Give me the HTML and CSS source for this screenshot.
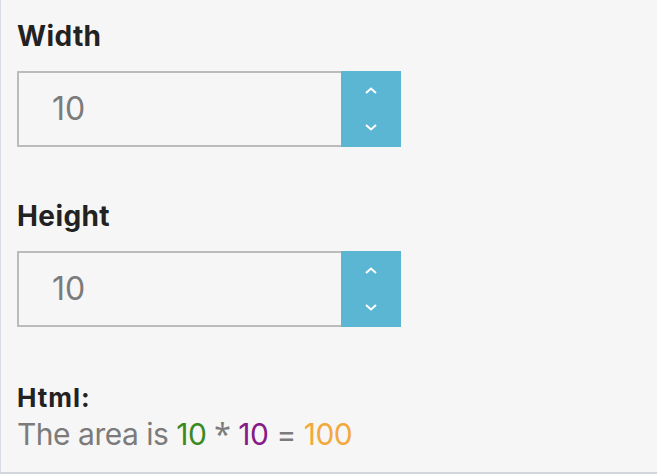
FILE: index.html
```html
<!DOCTYPE html>
<html>
<head>
<meta charset="utf-8">
<link rel="stylesheet" href="styles.css">
</head>
<body>
<div class="panel">
  <div class="field">
    <div class="label">Width</div>
    <div class="num">
      <div class="value">10</div>
      <div class="spin">
        <svg class="chev" width="12" height="7" viewBox="0 0 12 7"><path d="M1 6 L6 1.5 L11 6" fill="none" stroke="#fff" stroke-width="2"/></svg>
        <svg class="chev" width="12" height="7" viewBox="0 0 12 7"><path d="M1 1 L6 5.5 L11 1" fill="none" stroke="#fff" stroke-width="2"/></svg>
      </div>
    </div>
  </div>
  <div class="field">
    <div class="label">Height</div>
    <div class="num">
      <div class="value">10</div>
      <div class="spin">
        <svg class="chev" width="12" height="7" viewBox="0 0 12 7"><path d="M1 6 L6 1.5 L11 6" fill="none" stroke="#fff" stroke-width="2"/></svg>
        <svg class="chev" width="12" height="7" viewBox="0 0 12 7"><path d="M1 1 L6 5.5 L11 1" fill="none" stroke="#fff" stroke-width="2"/></svg>
      </div>
    </div>
  </div>
  <div class="result">
    <div class="rlabel">Html:</div>
    <div class="rtext">The area is <span class="g">10</span> <span class="ast">*</span> <span class="p">10</span> = <span class="o">100</span></div>
  </div>
</div>
</body>
</html>
```
FILE: styles.css
```css
html, body {
  margin: 0;
  padding: 0;
}
body {
  background: #f6f6f6;
  font-family: Inter, "Noto Sans", sans-serif;
}
.panel {
  box-sizing: border-box;
  height: 474px;
  border-left: 1px solid #d7dce3;
  border-bottom: 2px solid #d3d7dc;
  padding: 20px 0 0 16px;
}
.field {
  margin-bottom: 53px;
}
.label {
  font-size: 28px;
  line-height: 32px;
  font-weight: 700;
  letter-spacing: 0.4px;
  color: #222;
  margin-bottom: 19px;
}
.num {
  display: flex;
  width: 384px;
  height: 76px;
}
.value {
  flex: 1;
  box-sizing: border-box;
  border: 2px solid #bbbbbb;
  border-right: none;
  padding-left: 33px;
  font-size: 32px;
  line-height: 72px;
  color: #7b7b7b;
  font-weight: 400;
}
.spin {
  width: 60px;
  background: #5bb6d4;
  display: flex;
  flex-direction: column;
  align-items: center;
  justify-content: space-between;
  padding: 16px 0 16px;
  box-sizing: border-box;
}
.chev {
  display: block;
}
.result {
  margin-top: 56px;
}
.rlabel {
  font-size: 26px;
  line-height: 30px;
  font-weight: 700;
  letter-spacing: 1px;
  color: #222;
}
.rtext {
  font-size: 30px;
  line-height: 42px;
  letter-spacing: -0.5px;
  color: #7b7b7b;
}
.ast {
  font-family: "Noto Sans", sans-serif;
}
.g { color: #3a8a1e; }
.p { color: #861a86; }
.o { color: #f2a93b; }
```
